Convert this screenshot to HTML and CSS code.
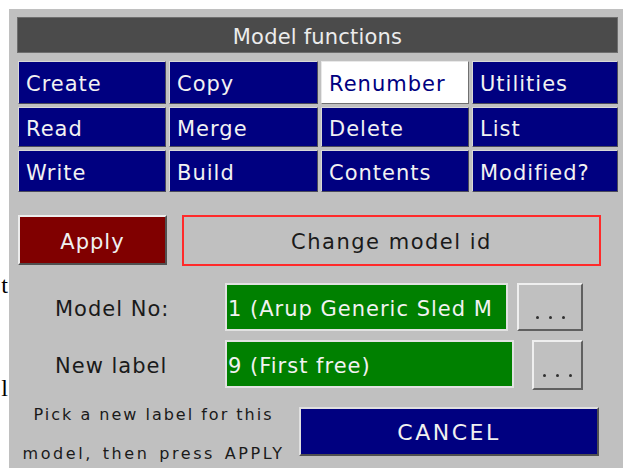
FILE: index.html
```html
<!DOCTYPE html>
<html>
<head>
<meta charset="utf-8">
<title>Model functions</title>
<link rel="stylesheet" href="styles.css">
</head>
<body>
<div class="bleed">
  <div class="bleed-t">t</div>
  <div class="bleed-l">l</div>
</div>
<div class="panel">
  <div class="header">Model functions</div>
  <div class="grid">
    <div class="cell">Create</div>
    <div class="cell">Copy</div>
    <div class="cell active">Renumber</div>
    <div class="cell">Utilities</div>
    <div class="cell">Read</div>
    <div class="cell">Merge</div>
    <div class="cell">Delete</div>
    <div class="cell">List</div>
    <div class="cell">Write</div>
    <div class="cell">Build</div>
    <div class="cell">Contents</div>
    <div class="cell">Modified?</div>
  </div>
  <div class="row row-apply">
    <div class="apply">Apply</div>
    <div class="mode">Change model id</div>
  </div>
  <div class="row row-model">
    <div class="label">Model No:</div>
    <div class="field field-model">1 (Arup Generic Sled M</div>
    <div class="dots dots-model"><i></i><i></i><i></i></div>
  </div>
  <div class="row row-new">
    <div class="label">New label</div>
    <div class="field field-new">9 (First free)</div>
    <div class="dots dots-new"><i></i><i></i><i></i></div>
  </div>
  <div class="row row-bottom">
    <div class="hint">
      <div class="hint-1">Pick a new label for this</div>
      <div class="hint-2">model, then press APPLY</div>
    </div>
    <div class="cancel">CANCEL</div>
  </div>
</div>
</body>
</html>
```
FILE: styles.css
```css
* { box-sizing: border-box; }
html, body { margin: 0; height: 100%; }
body {
  background: #ffffff;
  display: flex;
  padding-top: 9px;
  overflow: hidden;
  font-family: "DejaVu Sans", "Liberation Sans", sans-serif;
}
.bleed {
  width: 9px;
  flex: none;
  overflow: hidden;
  font-family: "Liberation Serif", serif;
  font-size: 24px;
  line-height: 24px;
  color: #000;
  text-align: right;
  padding-right: 1px;
}
.bleed-t { margin-top: 264px; }
.bleed-l { margin-top: 79px; }
.panel {
  flex: 1;
  background: #c0c0c0;
  padding: 8px 5px 0 8px;
  display: flex;
  flex-direction: column;
  overflow: hidden;
}
.panel > * { flex-shrink: 0; }
.header {
  height: 36px;
  background: #4b4b4b;
  border: 1px solid #6e6e6e;
  color: #ececec;
  font-size: 21px;
  letter-spacing: 0.2px;
  display: flex;
  align-items: center;
  justify-content: center;
  padding-top: 4px;
}
.grid {
  margin-top: 8px;
  margin-left: 1px;
  display: grid;
  grid-template-columns: 148px 149px 148px 1fr;
  grid-template-rows: 43px 40px 42px;
  gap: 3px 3px;
}
.cell {
  background: #000080;
  color: #f2f2f2;
  border: 1px solid #4a4a5a;
  border-top-color: #d8d8d8;
  border-left-color: #d8d8d8;
  font-size: 21px;
  letter-spacing: 1px;
  display: flex;
  align-items: center;
  padding-left: 7px;
  padding-top: 3px;
}
.cell.active {
  background: #ffffff;
  color: #000080;
  border-color: #e8e8e8 #707070 #707070 #e8e8e8;
}
.row { display: flex; align-items: flex-start; }
.row-apply { margin-top: 23px; margin-left: 1px; }
.apply {
  width: 149px;
  height: 50px;
  background: #800000;
  color: #f0f0f0;
  border: 2px solid #505050;
  border-top-color: #ececec;
  border-left-color: #ececec;
  font-size: 21px;
  letter-spacing: 1px;
  display: flex;
  align-items: center;
  justify-content: center;
  padding-top: 4px;
}
.mode {
  margin-left: 15px;
  width: 419px;
  height: 51px;
  border: 2px solid #ff2a2a;
  color: #1a1a1a;
  font-size: 21px;
  letter-spacing: 1.5px;
  display: flex;
  align-items: center;
  justify-content: center;
  padding-top: 3px;
}
.row-model { margin-top: 17px; }
.row-new { margin-top: 9px; }
.label {
  width: 208px;
  padding-left: 38px;
  height: 48px;
  display: flex;
  align-items: center;
  color: #1a1a1a;
  font-size: 21px;
  letter-spacing: 1px;
  padding-top: 3px;
}
.field {
  height: 48px;
  background: #008000;
  color: #f2f2f2;
  border: 2px solid #e2e2e2;
  font-size: 21px;
  letter-spacing: 1px;
  white-space: nowrap;
  overflow: hidden;
  display: flex;
  align-items: center;
  padding-left: 1px;
  padding-top: 4px;
}
.field-model { width: 283px; }
.field-new { width: 289px; }
.dots {
  background: #c0c0c0;
  border: 2px solid #606060;
  border-top-color: #efefef;
  border-left-color: #efefef;
  display: flex;
  align-items: flex-start;
  justify-content: center;
  gap: 10px;
  padding-top: 31px;
}
.dots i {
  display: block;
  width: 3px;
  height: 3px;
  border-radius: 50%;
  background: #303030;
}
.dots-model { margin-left: 9px; width: 66px; height: 48px; }
.dots-new { margin-left: 18px; width: 51px; height: 50px; padding-top: 32px; }
.row-bottom { margin-top: 3px; }
.hint {
  width: 282px;
  text-align: center;
  color: #1a1a1a;
  font-size: 16px;
  line-height: 40px;
  letter-spacing: 2px;
  padding-top: 2px;
  padding-right: 9px;
}
.hint-2 { letter-spacing: 2.6px; word-spacing: 2px; margin-top: -1px; }
.cancel {
  margin-top: 14px;
  width: 300px;
  height: 49px;
  background: #000080;
  color: #f0f0f0;
  border: 2px solid #505050;
  border-top-color: #e0e0e0;
  border-left-color: #e0e0e0;
  font-size: 22px;
  letter-spacing: 2.5px;
  display: flex;
  align-items: center;
  justify-content: center;
  padding-top: 2px;
}
```
